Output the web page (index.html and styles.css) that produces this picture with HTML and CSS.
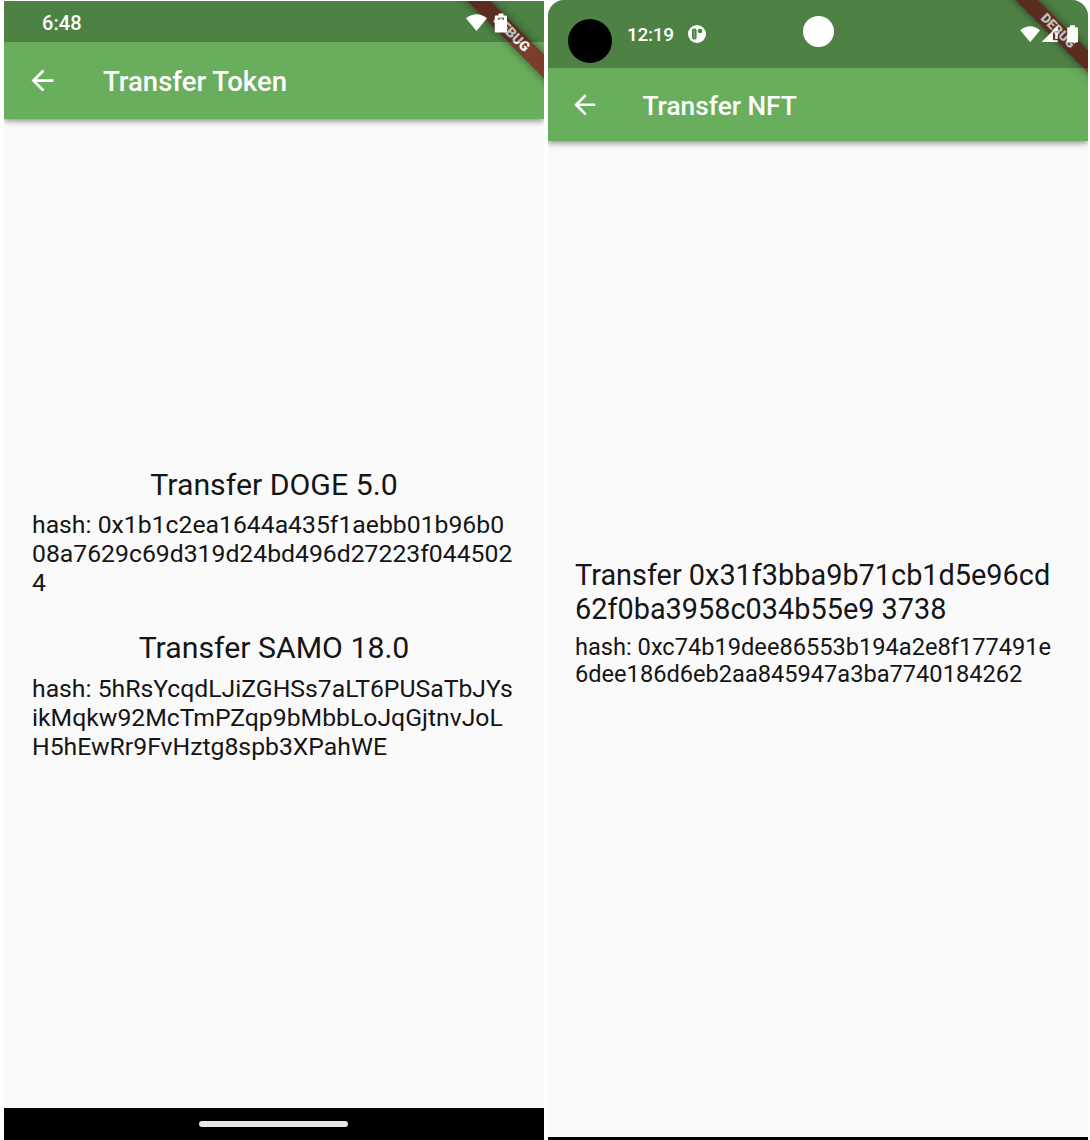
FILE: index.html
```html
<!DOCTYPE html>
<html lang="en">
<head>
<meta charset="utf-8">
<title>Transfer</title>
<link rel="stylesheet" href="styles.css">
</head>
<body>
<main class="screens">
  <section class="phone phone-token">
    <header class="top">
      <div class="status">
        <span class="time">6:48</span>
        <svg class="status-icons" width="44" height="22" viewBox="0 0 44 22" fill="#fff">
          <path d="M0 6.2Q10.5-1.5 21 6.2L10.5 19Z"/>
          <path d="M32.5 1.5H37.5V3.5H40Q41 3.5 41 4.5V19.4Q41 20.4 40 20.4H29.8Q28.8 20.4 28.8 19.4V4.5Q28.8 3.5 29.8 3.5H32.5Z"/>
          <path d="M32 5.6H38V8H32Z" fill="#6b6b66"/>
          <path d="M33.5 6.6H36.5V8H33.5Z"/>
        </svg>
      </div>
      <div class="appbar">
        <svg class="back" viewBox="0 0 24 24" fill="#fff"><path d="M20 11H7.83l5.59-5.59L12 4l-8 8 8 8 1.41-1.41L7.83 13H20v-2z"/></svg>
        <h1 class="title">Transfer Token</h1>
      </div>
      <div class="banner">DEBUG</div>
    </header>
    <div class="content">
      <article class="tx">
        <h2 class="name">Transfer DOGE 5.0</h2>
        <p class="hash">hash: 0x1b1c2ea1644a435f1aebb01b96b0<br>08a7629c69d319d24bd496d27223f044502<br>4</p>
      </article>
      <article class="tx">
        <h2 class="name">Transfer SAMO 18.0</h2>
        <p class="hash">hash: 5hRsYcqdLJiZGHSs7aLT6PUSaTbJYs<br>ikMqkw92McTmPZqp9bMbbLoJqGjtnvJoL<br>H5hEwRr9FvHztg8spb3XPahWE</p>
      </article>
    </div>
    <footer class="navbar"><span class="handle"></span></footer>
  </section>

  <section class="phone phone-nft">
    <header class="top">
      <div class="status">
        <span class="camera"></span>
        <span class="time">12:19</span>
        <svg class="notice" width="18" height="18" viewBox="0 0 18 18">
          <circle cx="9" cy="9" r="9" fill="#fff"/>
          <rect x="4" y="3.4" width="4.6" height="11.2" rx="1.8" fill="#4f8346"/>
          <rect x="5.7" y="5" width="1.2" height="8" rx=".6" fill="#86a980"/>
          <circle cx="12" cy="6" r="2.3" fill="#4f8346"/>
        </svg>
        <span class="lens"></span>
        <svg class="status-icons" width="60" height="20" viewBox="0 0 60 20" fill="#fff">
          <path d="M.3 6.2Q10-1.8 20 6.2L10.2 18.3Z"/>
          <path d="M21.7 18L37.7 2V7.5H33V18Z"/>
          <path d="M35.2 8.5H37.7V15H35.2ZM33 16.3H37.7V18H33Z"/>
          <path d="M50 1.3H55V3.2H57Q58 3.2 58 4.2V17.5Q58 18.5 57 18.5H48.2Q47.2 18.5 47.2 17.5V4.2Q47.2 3.2 48.2 3.2H50Z"/>
        </svg>
      </div>
      <div class="appbar">
        <svg class="back" viewBox="0 0 24 24" fill="#fff"><path d="M20 11H7.83l5.59-5.59L12 4l-8 8 8 8 1.41-1.41L7.83 13H20v-2z"/></svg>
        <h1 class="title">Transfer NFT</h1>
      </div>
      <div class="banner">DEBUG</div>
    </header>
    <div class="content">
      <article class="tx">
        <h2 class="name">Transfer 0x31f3bba9b71cb1d5e96cd<br>62f0ba3958c034b55e9 3738</h2>
        <p class="hash">hash: 0xc74b19dee86553b194a2e8f177491e<br>6dee186d6eb2aa845947a3ba7740184262</p>
      </article>
    </div>
    <footer class="navbar"></footer>
  </section>
</main>
</body>
</html>
```

FILE: styles.css
```css
* { box-sizing: border-box; }
body {
  margin: 0;
  background: #fff;
  color: #151515;
  font-family: Roboto, sans-serif;
}
h1, h2, p { margin: 0; font-weight: 400; }
svg { display: block; flex: none; }

.screens { display: flex; gap: 4px; height: 1140px; padding-left: 4px; }
.phone {
  --dp: 1.375px;
  display: flex;
  flex-direction: column;
  width: 540px;
  height: 1140px;
  overflow: hidden;
  background: #fafafa;
}
.phone-token { height: 1139px; margin-top: 1px; }
.phone-nft { --dp: 1.3125px; border-radius: 16px 16px 0 0; }

.top {
  position: relative;
  flex: none;
  background: #69ae5d;
  box-shadow: 0 2px 6px rgba(0, 0, 0, .45);
}
.status {
  position: relative;
  z-index: 2;
  display: flex;
  align-items: center;
  height: 41px;
  padding: 2px 4px 0 38px;
  background: rgba(0, 0, 0, .25);
  color: #fff;
}
.time { font-size: 20px; font-weight: 500; letter-spacing: .1px; }
.status-icons { margin-left: auto; }
.phone-token .status-icons { margin-right: 30px; }

.phone-nft .status { height: 68px; padding: 0 0 0 20px; }
.camera { width: 44px; height: 44px; margin-top: 14px; border-radius: 50%; background: #000; }
.phone-nft .time { width: 61px; margin-left: 15px; font-size: 19px; letter-spacing: -.3px; }
.lens { width: 31px; height: 31px; margin: -6px 0 0 97px; border-radius: 50%; background: #fff; }
.phone-nft .status-icons { margin-right: 8px; }

.appbar { display: flex; align-items: center; height: 77px; padding-left: 22px; }
.back { width: calc(24 * var(--dp)); height: calc(24 * var(--dp)); }
.title {
  margin: 2px 0 0 44px;
  font-size: calc(20 * var(--dp));
  font-weight: 500;
  color: #fff;
}
.phone-nft .appbar { height: 73px; padding-left: 21px; }
.phone-nft .title { margin-left: 42px; }

.banner {
  position: absolute;
  z-index: 1;
  top: calc(17.2 * var(--dp));
  right: calc(-36.6 * var(--dp));
  width: calc(120 * var(--dp));
  height: calc(12.4 * var(--dp));
  background: rgba(128, 22, 27, .75);
  box-shadow: 0 0 10px rgba(0, 0, 0, .5);
  color: #fff;
  font-size: calc(10.2 * var(--dp));
  font-weight: 900;
  line-height: calc(12.4 * var(--dp));
  text-align: center;
  transform: rotate(45deg);
}

.content {
  display: flex;
  flex: 1;
  flex-direction: column;
  justify-content: center;
  gap: 33px;
  padding: 0 28px;
}
.name {
  font-size: calc(22 * var(--dp));
  line-height: 35.5px;
  text-align: center;
  white-space: nowrap;
}
.hash {
  margin-top: 8px;
  font-size: calc(18 * var(--dp));
  line-height: 29px;
  white-space: nowrap;
}
.phone-nft .content { padding: 0 27px 32px; }
.phone-nft .name { line-height: 34.5px; text-align: left; }
.phone-nft .hash { margin-top: 7px; line-height: 27.5px; }

.navbar {
  display: flex;
  flex: none;
  align-items: center;
  justify-content: center;
  height: 32px;
  background: #000;
}
.handle { width: 149px; height: 6px; margin-right: 1px; border-radius: 3px; background: #e8e8e8; }
.phone-nft .navbar { height: 3px; }
```
